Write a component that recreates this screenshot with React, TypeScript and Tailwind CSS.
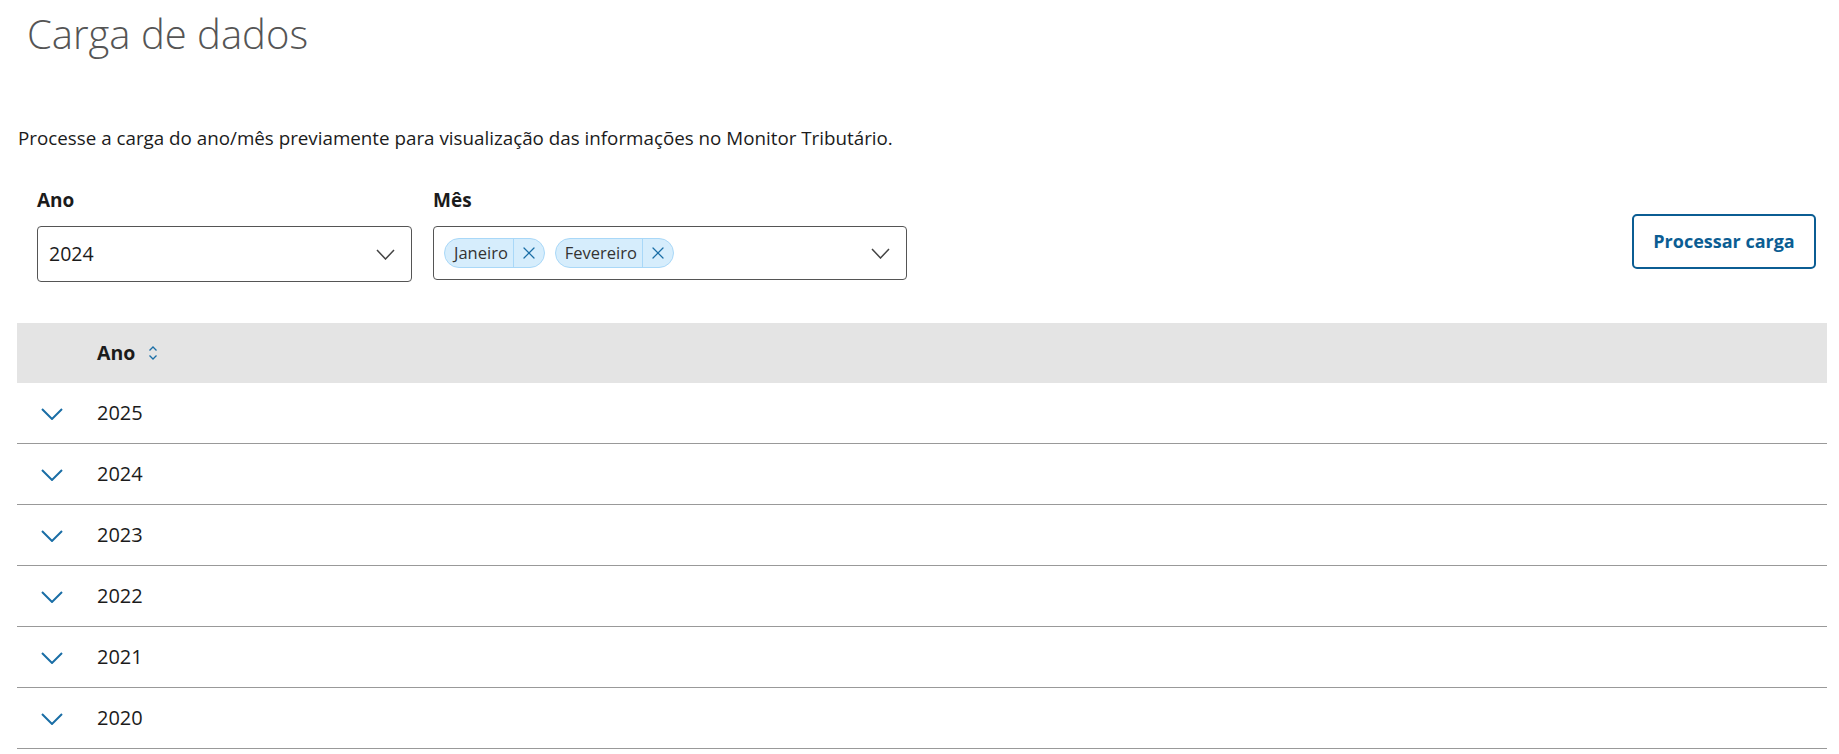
import { X } from "lucide-react";

const anos = ["2025", "2024", "2023", "2022", "2021", "2020"];
const meses = ["Janeiro", "Fevereiro"];

function SortIcon() {
  return (
    <svg width="10" height="16" viewBox="0 0 10 16" fill="none" stroke="#1a6ea6" strokeWidth="1.3">
      <path d="M1.5 5.5 L5 2 L8.5 5.5" />
      <path d="M1.5 10.5 L5 14 L8.5 10.5" />
    </svg>
  );
}

function Chevron({ w, h, color, stroke }: { w: number; h: number; color: string; stroke: number }) {
  return (
    <svg width={w} height={h} viewBox={`0 0 ${w} ${h}`} fill="none" stroke={color} strokeWidth={stroke}>
      <path d={`M1 1 L${w / 2} ${h - 1} L${w - 1} 1`} />
    </svg>
  );
}

export default function App() {
  return (
    <section
      className="min-h-screen bg-white pl-[17px] pr-[12px] text-[#1b1b1b]"
      style={{ fontFamily: "'Open Sans', 'Noto Sans', sans-serif" }}
    >
      {/* ================= HEADER ================= */}
      <h1 className="ml-[10px] pt-[6px] text-[40px] font-light leading-[56px] text-[#555]">
        Carga de dados
      </h1>

      <p className="ml-[1px] mt-[64px] text-[18.8px] leading-[24px]">
        Processe a carga do ano/mês previamente para visualização das informações no Monitor Tributário.
      </p>

      {/* ================= FILTROS ================= */}
      <div className="mt-[38px] flex">
        <div className="ml-[20px] w-[375px]">
          <label className="block text-[19px] font-bold leading-[24px]">Ano</label>
          <div className="mt-[14px] flex h-[56px] items-center justify-between rounded-[4px] border border-[#555] pl-[11px] pr-[16px]">
            <span className="text-[19.5px]">2024</span>
            <Chevron w={19} h={11} color="#444" stroke={1.5} />
          </div>
        </div>

        <div className="ml-[21px] w-[474px]">
          <label className="block text-[19px] font-bold leading-[24px]">Mês</label>
          <div className="mt-[14px] flex h-[54px] items-center justify-between rounded-[4px] border border-[#555] pl-[10px] pr-[16px]">
            <div className="flex gap-[10px]">
              {meses.map((m) => (
                <span
                  key={m}
                  className="flex h-[30px] items-center rounded-full border border-[#a9d8f8] bg-[#d6edfc] text-[16.5px] text-[#333]"
                >
                  <span className="pl-[9px] pr-[5px]">{m}</span>
                  <span className="flex h-full items-center border-l border-[#a9d8f8] px-[5px]">
                    <X size={20} strokeWidth={1.5} className="text-[#1a6ea6]" />
                  </span>
                </span>
              ))}
            </div>
            <Chevron w={19} h={11} color="#444" stroke={1.5} />
          </div>
        </div>

        <button className="ml-auto mr-[11px] mt-[26px] h-[55px] w-[184px] rounded-[5px] border-2 border-[#0b5d93] text-[18px] font-bold text-[#0b5d93]">
          Processar carga
        </button>
      </div>

      {/* ================= TABELA ================= */}
      <div className="mt-[41px]">
        <div className="flex h-[60px] items-center bg-[#e4e4e4]">
          <span className="ml-[80px] text-[19.5px] font-bold">Ano</span>
          <span className="ml-[13px] flex items-center">
            <SortIcon />
          </span>
        </div>

        {anos.map((ano) => (
          <div key={ano} className="flex h-[61px] items-center border-b border-[#999]">
            <span className="ml-[24px] flex w-[56px] pt-[2px]">
              <Chevron w={22} h={12} color="#1a6ea6" stroke={2} />
            </span>
            <span className="text-[20px]">{ano}</span>
          </div>
        ))}
      </div>
    </section>
  );
}
